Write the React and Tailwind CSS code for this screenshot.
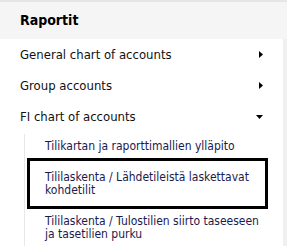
import React from "react";

const menu = [
  { label: "General chart of accounts", open: false },
  { label: "Group accounts", open: false },
  { label: "FI chart of accounts", open: true },
];

const subItems = [
  { lines: ["Tilikartan ja raporttimallien ylläpito"], active: false },
  { lines: ["Tililaskenta / Lähdetileistä laskettavat", "kohdetilit"], active: true },
  { lines: ["Tililaskenta / Tulostilien siirto taseeseen", "ja tasetilien purku"], active: false },
];

const Caret = ({ open }) =>
  open ? (
    <svg width="7" height="4" viewBox="0 0 7 4" className="block">
      <polygon points="0,0 7,0 3.5,4" fill="#000" />
    </svg>
  ) : (
    <svg width="4" height="7" viewBox="0 0 4 7" className="block">
      <polygon points="0,0 4,3.5 0,7" fill="#000" />
    </svg>
  );

export default function App() {
  return (
    <div className="w-[287px] h-[246px] bg-white overflow-hidden flex flex-col font-['DejaVu_Sans_Condensed','DejaVu_Sans',sans-serif] font-stretch-condensed">
      {/* top edge */}
      <div className="h-[2px] bg-[#e6e6e6]" />

      {/* header */}
      <div className="h-[37px] bg-[#f5f5f5] pl-5 flex items-center text-[14px] font-bold text-black">
        Raportit
      </div>

      <div className="flex flex-1 min-h-0">
        <div className="flex-1">
          {menu.map((item) => (
            <div
              key={item.label}
              className="h-[31px] flex items-center pl-5 pr-5 text-[13px] text-[#111]"
            >
              <span>{item.label}</span>
              <span className="ml-auto flex items-center">
                <Caret open={item.open} />
              </span>
            </div>
          ))}

          {/* submenu */}
          <div className="ml-6 mt-[2px] h-full border-l border-[#e8e8e8] pl-[2px] pr-[15px] text-[12px] leading-[13px] text-[#1a1a4e]">
            {subItems.map((sub, i) => (
              <div
                key={i}
                className={
                  sub.active
                    ? "border-[3px] border-black pl-[15px] pt-[10px] pb-[9px]"
                    : "border-[3px] border-transparent pl-[15px] pt-[3px] pb-[2px]"
                }
              >
                {sub.lines.map((l, j) => (
                  <div key={j}>{l}</div>
                ))}
              </div>
            ))}
          </div>
        </div>

        {/* right edge */}
        <div className="w-1 bg-[#f0f0f0]" />
      </div>
    </div>
  );
}
